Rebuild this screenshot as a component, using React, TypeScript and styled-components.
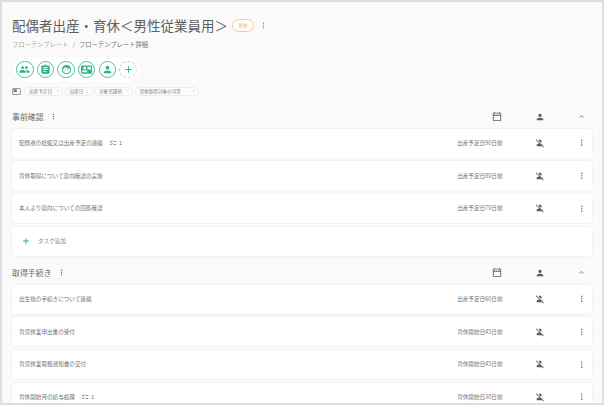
import React, { FC } from "react";
import styled, { createGlobalStyle } from "styled-components";
import {
  MdAdd,
  MdAssignment,
  MdChecklist,
  MdContactMail,
  MdExpandLess,
  MdFace,
  MdMoreVert,
  MdOutlineCalendarToday,
  MdOutlineFeaturedVideo,
  MdPeople,
  MdPerson,
  MdPersonOff,
} from "react-icons/md";

const GlobalStyle = createGlobalStyle`
  html, body {
    margin: 0;
    padding: 0;
    height: 100%;
    overflow: hidden;
    background: #dedede;
  }
  body {
    font-family: "Noto Sans CJK JP", "Noto Sans", sans-serif;
  }
`;

const Page = styled.div`
  box-sizing: border-box;
  width: 604px;
  height: 405px;
  padding: 2px;
  background: #dedede;
`;

const Screen = styled.div`
  height: 401px;
  padding: 0 10px;
  background: #fafafa;
  overflow: hidden;
`;

const TitleRow = styled.div`
  display: flex;
  align-items: center;
  height: 22px;
  padding-top: 12px;
`;

const Title = styled.h1`
  margin: 0;
  font-size: 13.5px;
  line-height: 22px;
  font-weight: 400;
  color: #5e5e5e;
  white-space: nowrap;
`;

const Badge = styled.span`
  box-sizing: border-box;
  width: 22px;
  height: 13px;
  margin-left: 4px;
  border: 1px solid #f8cf8e;
  border-radius: 7px;
  font-size: 4.5px;
  line-height: 11px;
  text-align: center;
  color: #f0b45c;
  background: #fffdf8;
`;

const TitleMenu = styled.span`
  display: flex;
  margin-left: 5px;
  color: #8a8a8a;
  font-size: 9px;
`;

const Breadcrumb = styled.div`
  display: flex;
  gap: 4px;
  height: 10px;
  margin-top: 4px;
  font-size: 6.3px;
  line-height: 10px;
  color: #a8a8a8;
`;

const Current = styled.span`
  color: #747474;
`;

const StepTray = styled.div`
  display: inline-flex;
  gap: 3.17px;
  padding: 3.5px 4px;
  margin-top: 7px;
  border-radius: 13px;
  background: #ffffff;
  box-shadow: 0 0 1px rgba(0, 0, 0, 0.1);
`;

const StepButton = styled.span<{ $dashed?: boolean }>`
  box-sizing: border-box;
  display: flex;
  align-items: center;
  justify-content: center;
  width: 17.5px;
  height: 17.5px;
  border-radius: 50%;
  border: ${(p) => (p.$dashed ? "1px dashed #cccccc" : "1px solid #4cc09c")};
  color: #2fb28a;
  font-size: 11px;
`;

const TagRow = styled.div`
  display: flex;
  align-items: center;
  margin-top: 5px;
  height: 9px;
  color: #7c7c7c;
  font-size: 9px;
`;

const TagIcon = styled.span`
  display: flex;
  width: 12px;
`;

const Tags = styled.div`
  display: flex;
  gap: 1.5px;
`;

const Tag = styled.span<{ $width: number }>`
  box-sizing: border-box;
  display: flex;
  justify-content: space-between;
  width: ${(p) => p.$width}px;
  height: 9px;
  padding: 0 3.5px 0 4px;
  border: 1px solid #ececec;
  border-radius: 5px;
  background: #fcfcfc;
  font-size: 4.6px;
  line-height: 7.5px;
  color: #808080;
  white-space: nowrap;
`;

const SectionHead = styled.div<{ $top: number }>`
  display: flex;
  align-items: center;
  height: 14px;
  margin-top: ${(p) => p.$top}px;
  margin-bottom: 5px;
`;

const SectionName = styled.span`
  font-size: 7.9px;
  line-height: 14px;
  color: #6c6c6c;
  white-space: nowrap;
`;

const SectionMenu = styled.span`
  display: flex;
  margin-left: 5.5px;
  font-size: 9px;
  color: #707070;
`;

const HeadIcons = styled.div`
  display: flex;
  align-items: center;
  margin-left: auto;
  color: #5c5c5c;
`;

const CalendarSlot = styled.span`
  display: flex;
  justify-content: center;
  width: 10px;
  font-size: 11px;
`;

const PersonSlot = styled.span`
  display: flex;
  justify-content: center;
  width: 10px;
  margin-left: 33px;
  font-size: 10px;
`;

const ChevronSlot = styled.span`
  display: flex;
  justify-content: center;
  width: 10px;
  margin-left: 31px;
  margin-right: 6px;
  font-size: 9px;
  color: #8a8a8a;
`;

const Rows = styled.div`
  display: flex;
  flex-direction: column;
  gap: 3.7px;
`;

const Card = styled.div`
  box-sizing: border-box;
  display: flex;
  align-items: center;
  flex: none;
  height: 29px;
  padding: 0 5px 0 7px;
  border-radius: 2px;
  background: #ffffff;
  box-shadow: 0 0 1.5px rgba(0, 0, 0, 0.14);
`;

const TaskName = styled.span`
  font-size: 5.6px;
  color: #747474;
  white-space: nowrap;
`;

const SubCount = styled.span`
  display: flex;
  align-items: center;
  gap: 2px;
  margin-left: 6px;
  font-size: 5.6px;
  color: #747474;

  svg {
    font-size: 8px;
  }
`;

const Due = styled.span`
  margin-left: auto;
  font-size: 5.6px;
  color: #747474;
  white-space: nowrap;
`;

const Unassigned = styled.span`
  display: flex;
  justify-content: center;
  width: 10px;
  margin-left: 32.5px;
  font-size: 10px;
  color: #5c5c5c;
`;

const RowMenu = styled.span`
  display: flex;
  justify-content: center;
  width: 10px;
  margin-left: 32px;
  font-size: 9.5px;
  color: #787878;
`;

const AddIcon = styled.span`
  display: flex;
  margin-left: 2px;
  font-size: 10px;
  color: #27ae84;
`;

const AddLabel = styled.span`
  margin-left: 7px;
  font-size: 5.6px;
  color: #8a8a8a;
`;

type Task = { name: string; due: string; sub?: boolean };

const first: Task[] = [
  { name: "配偶者の妊娠又は出産予定の連絡", due: "出産予定日90日前", sub: true },
  { name: "育休取得について意向確認の実施", due: "出産予定日80日前" },
  { name: "本人より意向についての回答確認", due: "出産予定日70日前" },
];

const second: Task[] = [
  { name: "出生後の手続きについて連絡", due: "出産予定日60日前" },
  { name: "育児休業申出書の受付", due: "育休開始日45日前" },
  { name: "育児休業取扱通知書の交付", due: "育休開始日45日前" },
  { name: "育休開始月の給与処理", due: "育休開始日30日前", sub: true },
];

const tags = [
  { label: "出産予定日", width: 39 },
  { label: "出産日", width: 28 },
  { label: "対象児誕柄", width: 39 },
  { label: "育休取得対象の可否", width: 64 },
];

const Head: FC<{ name: string; top: number }> = ({ name, top }) => (
  <SectionHead $top={top}>
    <SectionName>{name}</SectionName>
    <SectionMenu>
      <MdMoreVert />
    </SectionMenu>
    <HeadIcons>
      <CalendarSlot>
        <MdOutlineCalendarToday />
      </CalendarSlot>
      <PersonSlot>
        <MdPerson />
      </PersonSlot>
      <ChevronSlot>
        <MdExpandLess />
      </ChevronSlot>
    </HeadIcons>
  </SectionHead>
);

const TaskRow: FC<{ task: Task }> = ({ task }) => (
  <Card>
    <TaskName>{task.name}</TaskName>
    {task.sub && (
      <SubCount>
        <MdChecklist />1
      </SubCount>
    )}
    <Due>{task.due}</Due>
    <Unassigned>
      <MdPersonOff />
    </Unassigned>
    <RowMenu>
      <MdMoreVert />
    </RowMenu>
  </Card>
);

const App: FC = () => {
  return (
    <Page>
      <GlobalStyle />
      <Screen>
        <TitleRow>
          <Title>配偶者出産・育休＜男性従業員用＞</Title>
          <Badge>育休</Badge>
          <TitleMenu>
            <MdMoreVert />
          </TitleMenu>
        </TitleRow>
        <Breadcrumb>
          <span>フローテンプレート</span>
          <span>/</span>
          <Current>フローテンプレート詳細</Current>
        </Breadcrumb>
        <StepTray>
          <StepButton>
            <MdPeople />
          </StepButton>
          <StepButton>
            <MdAssignment />
          </StepButton>
          <StepButton>
            <MdFace />
          </StepButton>
          <StepButton>
            <MdContactMail />
          </StepButton>
          <StepButton>
            <MdPerson />
          </StepButton>
          <StepButton $dashed>
            <MdAdd />
          </StepButton>
        </StepTray>
        <TagRow>
          <TagIcon>
            <MdOutlineFeaturedVideo />
          </TagIcon>
          <Tags>
            {tags.map((t) => (
              <Tag key={t.label} $width={t.width}>
                <span>{t.label}</span>
                <span>:</span>
              </Tag>
            ))}
          </Tags>
        </TagRow>
        <Head name="事前確認" top={14} />
        <Rows>
          {first.map((t) => (
            <TaskRow key={t.name} task={t} />
          ))}
          <Card>
            <AddIcon>
              <MdAdd />
            </AddIcon>
            <AddLabel>タスク追加</AddLabel>
          </Card>
        </Rows>
        <Head name="取得手続き" top={10} />
        <Rows>
          {second.map((t) => (
            <TaskRow key={t.name} task={t} />
          ))}
        </Rows>
      </Screen>
    </Page>
  );
};

export default App;
